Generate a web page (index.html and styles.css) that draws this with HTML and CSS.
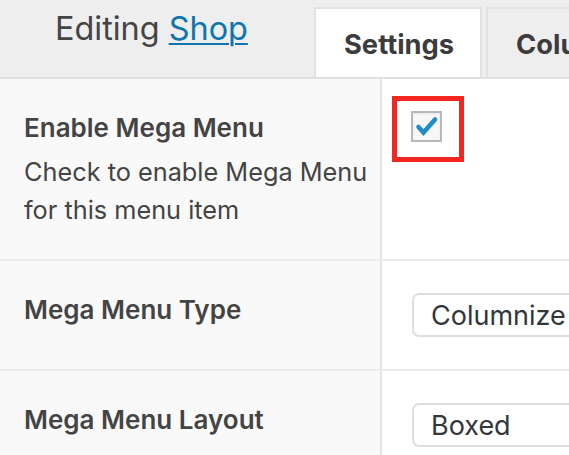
FILE: index.html
```html
<!DOCTYPE html>
<html>
<head>
<meta charset="utf-8">
<link rel="stylesheet" href="styles.css">
</head>
<body>
<div class="page">
  <header class="head">
    <div class="title">Editing <a href="#" class="link">Shop</a></div>
    <nav class="tabs">
      <div class="tab active">Settings</div>
      <div class="tab">Columns</div>
    </nav>
  </header>
  <div class="table">
    <div class="row row-first">
      <div class="th">
        <div class="label">Enable Mega Menu</div>
        <p class="desc">Check to enable Mega Menu for this menu item</p>
      </div>
      <div class="td">
        <span class="check-wrap">
          <span class="checkbox">
            <svg class="tick" viewBox="0 0 27 27" width="27" height="27"><polyline points="5.5,14 10.5,19.5 22,6.5" fill="none" stroke="#218dc2" stroke-width="4.6" stroke-linecap="round" stroke-linejoin="miter"/></svg>
          </span>
          <span class="highlight"></span>
        </span>
      </div>
    </div>
    <div class="row">
      <div class="th"><div class="label">Mega Menu Type</div></div>
      <div class="td"><div class="select">Columnize</div></div>
    </div>
    <div class="row">
      <div class="th"><div class="label">Mega Menu Layout</div></div>
      <div class="td"><div class="select">Boxed</div></div>
    </div>
  </div>
</div>
</body>
</html>
```
FILE: styles.css
```css
html, body {
  margin: 0;
  padding: 0;
  background: #ffffff;
  overflow: hidden;
}
body {
  font-family: Inter, "Liberation Sans", sans-serif;
  color: #444444;
  width: 569px;
  height: 455px;
}
.page {
  width: 569px;
}
.head {
  display: flex;
  align-items: flex-end;
  height: 77px;
  background: #eeeeee;
  border-bottom: 2px solid #e0e0e0;
}
.title {
  flex: 0 0 314px;
  box-sizing: border-box;
  padding-left: 55px;
  align-self: flex-start;
  margin-top: 9px;
  font-size: 32.4px;
  line-height: 40px;
  color: #444444;
  white-space: nowrap;
}
.link {
  color: #0f76ad;
  text-decoration: underline;
  text-decoration-thickness: 2px;
  text-underline-offset: 3px;
}
.tabs {
  display: flex;
  gap: 4px;
  flex: 0 0 auto;
}
.tab {
  height: 70px;
  box-sizing: border-box;
  display: flex;
  align-items: center;
  padding: 2px 26px 0 28px;
  border: 2px solid #e2e2e2;
  border-bottom: none;
  font-size: 27.3px;
  font-weight: 700;
  color: #3c3c3c;
  background: #eeeeee;
  white-space: nowrap;
}
.tab.active {
  background: #ffffff;
}
.row {
  display: grid;
  grid-template-columns: 382px 1fr;
  border-bottom: 2px solid #ececec;
}
.th {
  background: #f9f9f9;
  border-right: 2px solid #e4e4e4;
  padding: 33px 10px 33px 24px;
}
.row-first .th {
  padding-bottom: 30px;
}
.label {
  font-size: 26px;
  font-weight: 600;
  line-height: 31px;
  color: #444444;
  white-space: nowrap;
}
.desc {
  margin: 10px 0 0;
  font-size: 25.3px;
  line-height: 38px;
  color: #444444;
}
.td {
  padding: 32px 0 32px 30px;
  overflow: hidden;
}
.row-first .td {
  padding-left: 29px;
}
.check-wrap {
  position: relative;
  display: inline-block;
}
.checkbox {
  display: flex;
  align-items: center;
  justify-content: center;
  width: 31px;
  height: 31px;
  box-sizing: border-box;
  border: 2px solid #b4b9be;
  background: #f7f7f7;
  box-shadow: inset 0 1px 2px rgba(0,0,0,0.08);
}
.tick {
  display: block;
}
.highlight {
  position: absolute;
  left: -19px;
  top: -15px;
  width: 72px;
  height: 66px;
  box-sizing: border-box;
  border: 5px solid #f3271f;
}
.select {
  width: 220px;
  height: 44px;
  box-sizing: border-box;
  border: 2px solid #dedede;
  border-radius: 7px;
  background: #ffffff;
  padding-left: 17px;
  display: flex;
  align-items: center;
  font-size: 27px;
  color: #32373c;
  white-space: nowrap;
}
```
